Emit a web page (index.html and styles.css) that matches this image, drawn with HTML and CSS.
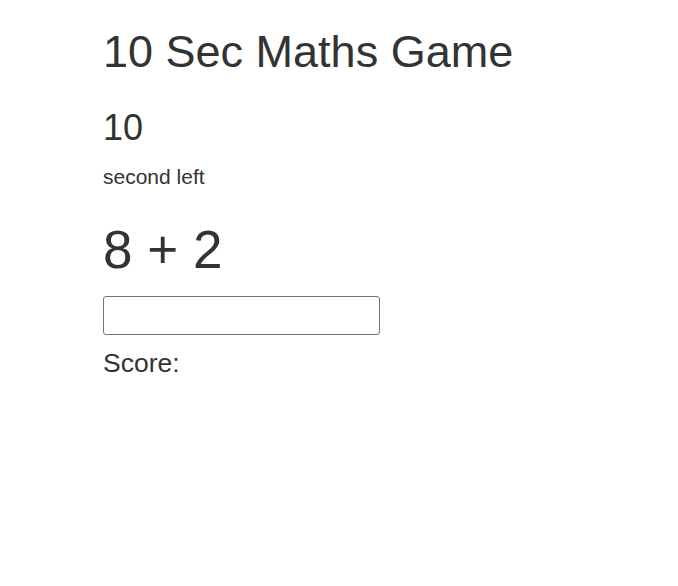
FILE: index.html
```html
<!DOCTYPE html>
<html lang="en">
<head>
  <meta charset="UTF-8">
  <title>10 Sec Maths Game</title>
  <link rel="stylesheet" href="styles.css">
</head>
<body>
  <div class="container">
    <h1>10 Sec Maths Game</h1>

    <h2 id="timer">10</h2>
    <p class="timer-label">second left</p>

    <div id="question" class="question">8 + 2</div>
    <input type="text" id="answer" class="answer">

    <p class="score">Score: <span id="score"></span></p>
  </div>
</body>
</html>
```

FILE: styles.css
```css
body { margin: 0; font-family: "Liberation Sans", Arial, sans-serif; color: #333; background: #fff; }
.container { padding: 27px 0 0 103px; }
h1 { font-size: 45px; font-weight: normal; line-height: 1.1; margin: 0 0 31px; }
h2 { font-size: 36px; font-weight: normal; line-height: 1.1; margin: 0 0 17px; }
.timer-label { font-size: 21px; line-height: 1.2; margin: 0 0 32px; }
.question { font-size: 53px; line-height: 1.1; margin: 0 0 16px; }
.answer { display: block; box-sizing: border-box; width: 277px; height: 39px; margin: 0; border: 1px solid #767676; border-radius: 3px; padding: 4px 8px; font-size: 18px; }
.score { font-size: 26.5px; line-height: 1.2; margin: 13px 0 0; }
```
